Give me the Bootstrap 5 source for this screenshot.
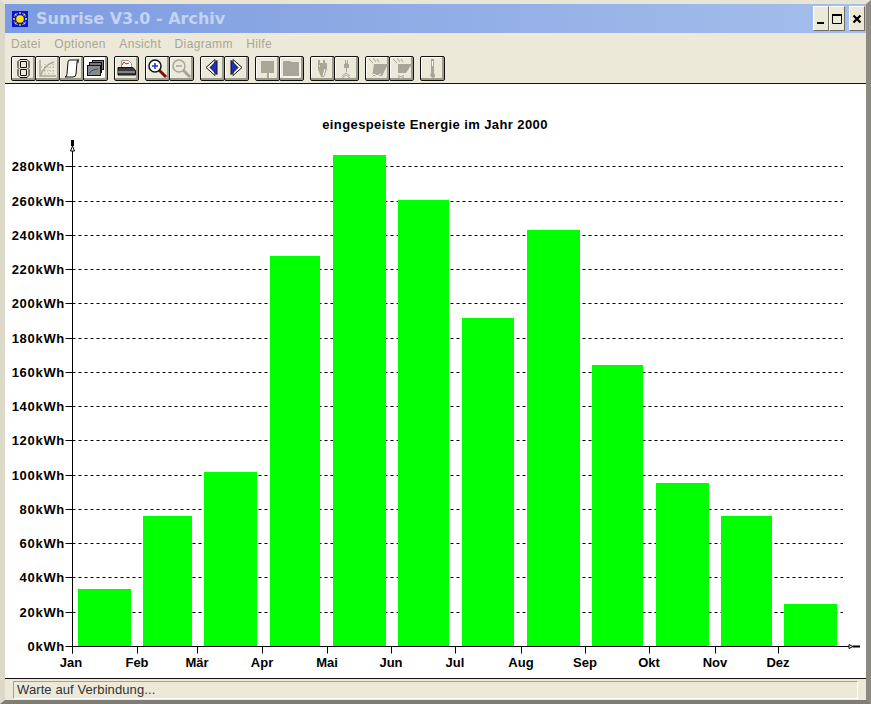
<!DOCTYPE html>
<html lang="de">
<head>
    <meta charset="UTF-8">
    <meta name="viewport" content="width=device-width, initial-scale=1.0">
    <title>Sunrise V3.0 - Archiv</title>
    <link href="https://cdn.jsdelivr.net/npm/bootstrap@5.3.0/dist/css/bootstrap.min.css" rel="stylesheet">
    <style>
        html, body { margin: 0; height: 704px; overflow: hidden; background: #ece9d8; }
        .app-window { width: 871px; height: 704px; background: #ece9d8; border-style: solid; border-width: 4px 5px 4px 5px; border-color: #e8e5d4 #8c8a80 #7f7d74 #dcd9c8; font-family: "Liberation Sans", Arial, sans-serif; }
        .title-bar { height: 29px; background: linear-gradient(90deg, #7d9be0 0%, #a4bfec 100%); padding: 0 1px 0 7px; }
        .title-text { font-family: "DejaVu Sans", sans-serif; font-weight: 700; font-size: 16px; color: #c3d3f3; margin-left: 8px; }
        .win-btn { width: 16px; height: 25px; background: #ece9d8; border: 1px solid; border-color: #fff #6e6d66 #6e6d66 #fff; padding: 0; display: flex; align-items: center; justify-content: center; }
        .menu-row { height: 21px; padding-left: 6px; gap: 13.5px; font-size: 12px; letter-spacing: .35px; color: #a8a596; }
        .tool-row { height: 29px; padding: 2px 0 0 6px; }
        .tool-btn { width: 25px; height: 25px; border: 1px solid #111; border-radius: 2px; background: #ece9d8; box-shadow: inset -2px -2px 0 #9c9a8c, inset 1px 1px 0 #fff; padding: 0; display: flex; align-items: center; justify-content: center; }
        .tool-btn + .tool-btn { margin-left: -1px; }
        .tool-btn.is-on { background: #fff; }
        .tool-group { margin-right: 6px; }
        .chart-pane { height: 596px; background: #fff; border-top: 1px solid #111; border-bottom: 1px solid #111; }
        .chart-pane svg { display: block; }
        .chart-pane text { font-family: "Liberation Sans", Arial, sans-serif; font-weight: 700; font-size: 13px; fill: #000; }
        .chart-pane text.axis-label { letter-spacing: .7px; }
        .chart-pane text.chart-title { letter-spacing: .4px; }
        .status-row { height: 20px; padding: 2px 8px 0 8px; }
        .status-cell { height: 18px; border: 1px solid; border-color: #a5a294 #fff #fff #a5a294; font-size: 13px; letter-spacing: .1px; line-height: 16px; color: #333; padding-left: 3px; }
    </style>
</head>
<body>
    <div class="app-window">
        <div class="title-bar d-flex align-items-center">
            <svg width="16" height="16" viewBox="0 0 16 16">
                <rect width="16" height="16" fill="#0a14d8"/>
                <path d="M8 1v2M8 13v2M1 8h2M13 8h2M3 3l1.500 1.500M13 3l-1.500 1.500M3 13l1.500-1.500M13 13l-1.500-1.500" stroke="#ffe600" stroke-width="1.300"/>
                <path d="M2 5h1M13 5h1M2 11h1M13 11h1M5 2v1M11 2v1M5 13v1M11 13v1" stroke="#ffe600"/>
                <circle cx="8" cy="8" r="3.800" fill="#ffe600"/>
            </svg>
            <span class="title-text flex-grow-1">Sunrise V3.0 - Archiv</span>
            <div class="win-btn"><svg width="10" height="12"><rect x="1" y="9" width="7" height="2"/></svg></div>
            <div class="win-btn"><svg width="12" height="12"><path d="M1.500 2.500h9v8h-9z" fill="none" stroke="#000"/><path d="M1 2h10" stroke="#000" stroke-width="2"/></svg></div>
            <div class="win-btn ms-1"><svg width="10" height="10"><path d="M1.500 1.500l7 7M8.500 1.500l-7 7" stroke="#000" stroke-width="2.200"/></svg></div>
        </div>
        <div class="menu-row d-flex align-items-center">
            <span>Datei</span><span>Optionen</span><span>Ansicht</span><span>Diagramm</span><span>Hilfe</span>
        </div>
        <div class="tool-row d-flex" id="tools"></div>
        <div class="chart-pane"><svg id="chart" width="861" height="594"></svg></div>
        <div class="status-row"><div class="status-cell">Warte auf Verbindung...</div></div>
    </div>

    <script>
        const grey = "#a8a698";
        const icons = {
            digit: `<path d="M8 2.500h7l2 2v6l-1 1 1 1v6l-2 2H8l-2-2v-6l1-1-1-1v-6z" fill="none" stroke="#111"/><path d="M8.500 4.500h6v6h-6zM8.500 12.500h6v6h-6z" fill="none" stroke="#111"/>`,
            curve: `<path d="M4 3v16h16" fill="none" stroke="${grey}" stroke-width="1.500"/><path d="M5 18q3-10 13-13" fill="none" stroke="${grey}" stroke-width="1.500"/><path d="M9 7v11M13 7v11M17 7v11M5 10h13M5 14h13" stroke="${grey}" stroke-dasharray="1 2"/>`,
            scroll: `<path d="M8 5q0-2 2-2h9q-2 0-2 2l-1 12q0 3-3 3H5q2 0 2-3z" fill="#fff" stroke="#111"/><path d="M17 5h2" stroke="#111"/>`,
            stack: `<rect x="8.500" y="3.500" width="11" height="9" fill="#777" stroke="#111"/><rect x="5.500" y="5.500" width="12" height="10" fill="#777" stroke="#111"/><rect x="3.500" y="8.500" width="13" height="10" fill="#8a8a84" stroke="#111"/><path d="M5 16l4-3 5-1" fill="none" stroke="#2440d0"/>`,
            printer: `<path d="M6.500 11V3.500h7l3 3V11z" fill="#fff" stroke="#999"/><path d="M7 8l2-3 2 2 3-1" fill="none" stroke="#d02020"/><path d="M3 10.500h15l2.500 3V18H3z" fill="#3a3a3a" stroke="#111"/><path d="M3 15h17" stroke="#ccc"/>`,
            zoomIn: `<path d="M13 13l7 7" stroke="#7a1010" stroke-width="3"/><circle cx="9" cy="9" r="6" fill="#fff" stroke="#111" stroke-width="1.500"/><path d="M6 9h6M9 6v6" stroke="#1c30d0" stroke-width="1.500"/>`,
            zoomOut: `<path d="M13 13l7 7" stroke="${grey}" stroke-width="3"/><circle cx="9" cy="9" r="6" fill="#ece9d8" stroke="${grey}" stroke-width="1.500"/><path d="M6 9h6" stroke="${grey}" stroke-width="1.500"/>`,
            prev: `<path d="M5 10.500L14 2.500v16z" fill="#fff" stroke="#111"/><path d="M9 10.500l7-7v14z" fill="#1c30d0" stroke="#111"/>`,
            next: `<path d="M17 10.500L8 2.500v16z" fill="#fff" stroke="#111"/><path d="M13 10.500l-7-7v14z" fill="#1c30d0" stroke="#111"/>`,
            sign: `<path d="M5 4h13v12h-5v5h-2v-5H5z" fill="${grey}"/><path d="M13.500 16v5" stroke="#fff"/>`,
            block: `<path d="M4 4h6l2 1h7v14H3V5z" fill="${grey}"/><path d="M20 5v15H4" fill="none" stroke="#fff"/>`,
            plugA: `<path d="M7 3h2v3h3V3h2v3h2v6l-3 8h-3l-3-8V6z" fill="${grey}"/><path d="M8 9h1M14 12l-2 7" stroke="#fff"/>`,
            plugB: `<path d="M10 3h1v3h1V3h1v4h1v4h-2v4h-1v-4H9V7h1z" fill="${grey}"/><path d="M7 19l4-3 4 3M7 21l4-3 4 3" fill="none" stroke="${grey}"/>`,
            panelA: `<path d="M8 7h14l-6 12H7l-1 1z" fill="${grey}"/><path d="M3 2l4 4M7 1l3 4M11 2l2 3" stroke="${grey}"/><path d="M6 19l2-2 3 2 4-2" fill="none" stroke="#fff"/>`,
            panelB: `<path d="M8 7h14l-6 9H8z" fill="${grey}"/><path d="M3 2l4 4M7 1l3 4M11 2l2 3" stroke="${grey}"/><path d="M8 18l3 2 3-2M8 20l3 2 3-2" fill="none" stroke="${grey}"/>`,
            thermo: `<path d="M10 2h3v14l1 2v2l-2 1-2-1-1-2 1-2z" fill="${grey}"/><path d="M11.500 4v5" stroke="#fff"/>`
        };

        const toolGroups = [
            [{ icon: "digit" }, { icon: "curve" }, { icon: "scroll" }, { icon: "stack", on: true }],
            [{ icon: "printer" }],
            [{ icon: "zoomIn" }, { icon: "zoomOut" }],
            [{ icon: "prev" }, { icon: "next" }],
            [{ icon: "sign" }, { icon: "block" }],
            [{ icon: "plugA" }, { icon: "plugB" }],
            [{ icon: "panelA" }, { icon: "panelB" }],
            [{ icon: "thermo" }]
        ];

        document.getElementById("tools").innerHTML = toolGroups.map(group =>
            `<div class="tool-group d-flex">` + group.map(t =>
                `<div class="tool-btn${t.on ? " is-on" : ""}"><svg width="23" height="23" viewBox="0 0 23 23">${icons[t.icon]}</svg></div>`
            ).join("") + `</div>`
        ).join("");

        // chart coordinates are page pixels minus the pane origin
        const OX = 5, OY = 84;
        const baseRow = 646;
        const pxPerKwh = (646 - 166.4) / 280;
        const bars = [
            [78, 131, 589], [143, 192, 516], [204, 257, 472], [270, 320, 256],
            [333, 386, 155], [398, 449, 200], [462, 514, 318], [527, 580, 230],
            [592, 643, 365], [656, 709, 483], [721, 772, 516], [784, 837, 604]
        ];
        const months = [["Jan", 71], ["Feb", 137], ["Mär", 197], ["Apr", 262], ["Mai", 327], ["Jun", 391], ["Jul", 455], ["Aug", 521], ["Sep", 585], ["Okt", 649], ["Nov", 715], ["Dez", 778]];
        const ax = 72 - OX + .5, by = baseRow - OY + .5;

        let svg = `<text class="chart-title" x="${435 - OX}" y="${129 - OY}" text-anchor="middle">eingespeiste Energie im Jahr 2000</text>`;
        for (let kwh = 0; kwh <= 280; kwh += 20) {
            const y = Math.round(baseRow - kwh * pxPerKwh) - OY + .5;
            if (kwh > 0) svg += `<path d="M${ax} ${y}H${843 - OX}" stroke="#000" stroke-dasharray="3 3"/>`;
            svg += `<path d="M${ax - 7} ${y}H${ax}" stroke="#000"/>`;
            svg += `<text class="axis-label" x="${65 - OX}" y="${y + 4.5}" text-anchor="end">${kwh}kWh</text>`;
        }
        bars.forEach(([x1, x2, top]) => {
            svg += `<rect x="${x1 - OX}" y="${top - OY}" width="${x2 - x1}" height="${baseRow - top}" fill="#0f0"/>`;
        });
        svg += `<path d="M${ax} ${140 - OY}V${by + 7}" stroke="#000"/>`;
        svg += `<path d="M${ax - 5} ${by}H${860 - OX}" stroke="#000"/>`;
        svg += `<path d="M${ax} ${146 - OY}l-2 5h4z" fill="#fff" stroke="#000"/><path d="M${ax} ${140 - OY}v6" stroke="#000" stroke-width="3"/>`;
        svg += `<path d="M${853 - OX} ${by}l-4-2v4z" fill="#fff" stroke="#000"/><path d="M${853 - OX} ${by}h7" stroke="#000" stroke-width="2"/>`;
        months.forEach(([name, x]) => {
            const tick = name === "Jan" ? 72 : x;
            svg += `<path d="M${tick - OX + .5} ${by}v7" stroke="#000"/>`;
            svg += `<text x="${x - OX}" y="${667 - OY}" text-anchor="middle">${name}</text>`;
        });
        document.getElementById("chart").innerHTML = svg;
    </script>
    <script src="https://cdn.jsdelivr.net/npm/bootstrap@5.3.0/dist/js/bootstrap.bundle.min.js"></script>
</body>
</html>
